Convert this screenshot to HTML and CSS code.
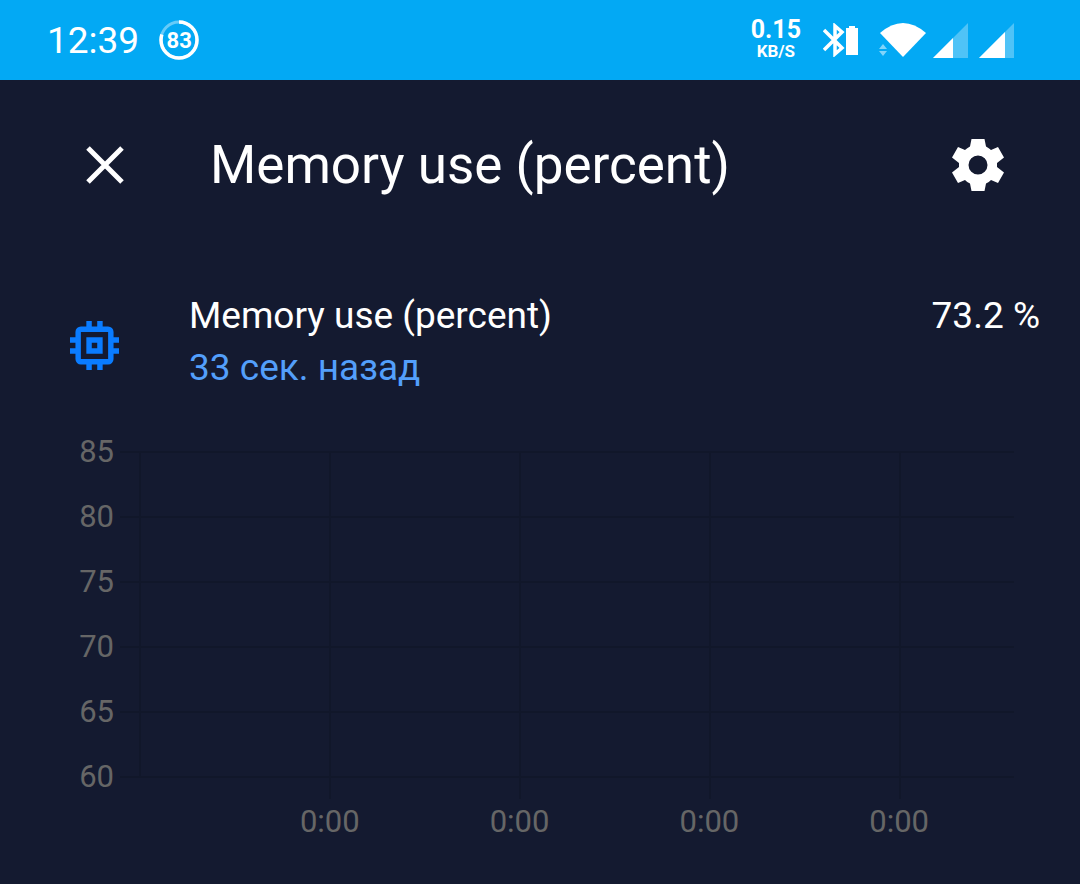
FILE: index.html
```html
<!DOCTYPE html>
<html lang="ru">
<head>
    <meta charset="UTF-8">
    <meta name="viewport" content="width=device-width, initial-scale=1.0">
    <title>Memory use (percent)</title>
    <link rel="stylesheet" href="styles.css">
</head>
<body>
    <div class="status-bar">
        <span class="clock">12:39</span>
        <div class="battery-ring">
            <svg viewBox="0 0 40 40" aria-hidden="true">
                <circle cx="20" cy="20" r="18" fill="none" stroke="#fff" stroke-opacity="0.4" stroke-width="3"/>
                <circle cx="20" cy="20" r="18" fill="none" stroke="#fff" stroke-width="3.5" pathLength="100" stroke-dasharray="80 20" transform="rotate(-90 20 20)"/>
            </svg>
            <span>83</span>
        </div>
        <div class="net-speed">
            <span class="net-value">0.15</span>
            <span class="net-unit">KB/S</span>
        </div>
        <svg class="icon-bluetooth" viewBox="0 0 36 34" aria-hidden="true">
            <path d="M1 7l18 18-7 6V3l7 6L1 27" fill="none" stroke="#fff" stroke-width="3.5"/>
            <path d="M23 5h3V3h6v2h3v27H23z" fill="#fff"/>
        </svg>
        <svg class="icon-wifi" viewBox="0 0 48 36" aria-hidden="true">
            <path d="M1 11Q24-9 47 11L24 35z" fill="#fff"/>
            <path d="M0 27l4-5 4 5zM0 29h8l-4 5z" fill="#fff" fill-opacity="0.5"/>
        </svg>
        <svg class="icon-signal" viewBox="0 0 35 35" aria-hidden="true">
            <path d="M35 0v35H0z" fill="#fff" fill-opacity="0.3"/>
            <path d="M20 15v20H0z" fill="#fff"/>
        </svg>
        <svg class="icon-signal" viewBox="0 0 35 35" aria-hidden="true">
            <path d="M35 0v35H0z" fill="#fff" fill-opacity="0.3"/>
            <path d="M26 9v26H0z" fill="#fff"/>
        </svg>
    </div>

    <header class="header">
        <button class="icon-btn" type="button" aria-label="Закрыть">
            <svg viewBox="0 0 64 64" aria-hidden="true">
                <path d="M15 15l34 34M49 15L15 49" stroke="#fff" stroke-width="5"/>
            </svg>
        </button>
        <h1>Memory use (percent)</h1>
        <button class="icon-btn" type="button" aria-label="Настройки">
            <svg viewBox="-32 -32 64 64" aria-hidden="true">
                <path fill="#fff" fill-rule="evenodd" d="M-6.500-26H6.500L8-18.500Q11-17 13-15L20-18L26-7.500L19-2V2L26 7.500L20 18L13 15Q11 17 8 18.500L6.500 26H-6.500L-8 18.500Q-11 17-13 15L-20 18L-26 7.500L-19 2V-2L-26-7.500L-20-18L-13-15Q-11-17-8-18.500zM0-9.500A9.500 9.500 0 1 0 0 9.500A9.500 9.500 0 1 0 0-9.500z"/>
            </svg>
        </button>
    </header>

    <main>
        <div class="state-row">
            <svg class="icon-chip" viewBox="3 3 18 18" aria-hidden="true">
                <path fill="#0a7cff" d="M17 17H7V7h10m4 4V9h-2V7a2 2 0 0 0-2-2h-2V3h-2v2h-2V3H9v2H7a2 2 0 0 0-2 2v2H3v2h2v2H3v2h2v2a2 2 0 0 0 2 2h2v2h2v-2h2v2h2v-2h2a2 2 0 0 0 2-2v-2h2v-2h-2v-2h2m-8 2h-2v-2h2m2-2H9v6h6z"/>
            </svg>
            <div class="state-info">
                <div class="state-name">Memory use (percent)</div>
                <div class="state-time">33 сек. назад</div>
            </div>
            <div class="state-value">73.2 %</div>
        </div>

        <div class="chart">
            <ul class="y-axis">
                <li>85</li>
                <li>80</li>
                <li>75</li>
                <li>70</li>
                <li>65</li>
                <li>60</li>
            </ul>
            <div class="plot">
                <div class="plot-lines">
                    <div class="plot-columns">
                        <span></span>
                        <span></span>
                        <span></span>
                        <span></span>
                        <span></span>
                    </div>
                </div>
                <ul class="x-axis">
                    <li>0:00</li>
                    <li>0:00</li>
                    <li>0:00</li>
                    <li>0:00</li>
                </ul>
            </div>
        </div>
    </main>
</body>
</html>
```

FILE: styles.css
```css
* {
    margin: 0;
    padding: 0;
    box-sizing: border-box;
}

body {
    background-color: #141a30;
    color: #fff;
    font-family: Roboto, sans-serif;
}

ul {
    list-style: none;
}

svg {
    display: block;
}

/* status bar */
.status-bar {
    display: flex;
    align-items: center;
    height: 80px;
    padding: 0 66px 0 47px;
    background-color: #03a9f4;
}

.clock {
    font-size: 37px;
    line-height: 40px;
    padding-top: 2px;
}

.battery-ring {
    position: relative;
    width: 40px;
    height: 40px;
    margin-left: 20px;
}

.battery-ring span {
    position: absolute;
    inset: 0;
    font-size: 22px;
    font-weight: 700;
    line-height: 42px;
    text-align: center;
}

.net-speed {
    display: flex;
    flex-direction: column;
    align-items: center;
    margin-left: auto;
    padding-bottom: 2px;
    font-weight: 700;
}

.net-value {
    font-size: 25px;
    line-height: 24px;
}

.net-unit {
    font-size: 17px;
    line-height: 18px;
}

.icon-bluetooth {
    width: 36px;
    height: 34px;
    margin-left: 22px;
}

.icon-wifi {
    width: 48px;
    height: 36px;
    margin-left: 20px;
}

.icon-signal {
    width: 35px;
    height: 35px;
    margin-left: 6px;
}

.icon-signal + .icon-signal {
    margin-left: 11px;
}

/* dialog header */
.header {
    display: flex;
    align-items: center;
    height: 170px;
    padding: 0 70px 0 73px;
}

.header h1 {
    flex: 1;
    margin-left: 73px;
    font-size: 53px;
    font-weight: 400;
    line-height: 64px;
}

.icon-btn {
    width: 64px;
    height: 64px;
    border: none;
    background: none;
    cursor: pointer;
}

/* current state */
.state-row {
    display: flex;
    margin-top: 40px;
    padding: 0 40px 0 70px;
    font-size: 37px;
    line-height: 52px;
}

.icon-chip {
    width: 49px;
    height: 49px;
    margin-top: 31px;
}

.state-info {
    flex: 1;
    margin-left: 70px;
}

.state-time {
    color: #539ffb;
}

/* chart */
.chart {
    display: flex;
    margin-top: 25px;
    padding: 0 66px 0 60px;
    color: #666;
    font-size: 31px;
}

.y-axis {
    width: 60px;
    padding-right: 6px;
    text-align: right;
    line-height: 65px;
}

.plot {
    flex: 1;
    margin-top: 32px;
}

.plot-lines {
    height: 327px;
    padding-left: 19px;
    background: repeating-linear-gradient(#11172a 0 2px, transparent 2px 65px);
}

.plot-columns {
    display: grid;
    grid-template-columns: 190fr 190fr 190fr 190fr 115fr;
}

.plot-columns span {
    height: 348px;
    border-left: 2px solid #11172a;
}

.plot-columns span:first-child {
    height: 327px;
}

.x-axis {
    display: grid;
    grid-template-columns: 95fr 190fr 190fr 190fr 190fr 20fr;
    padding-left: 20px;
    margin-top: 24px;
    line-height: 40px;
    text-align: center;
}

.x-axis li:first-child {
    grid-column-start: 2;
}
```
